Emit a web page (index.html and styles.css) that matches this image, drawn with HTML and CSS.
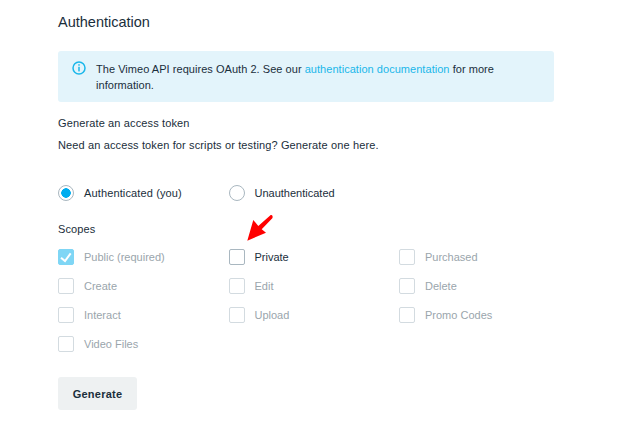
FILE: index.html
```html
<!DOCTYPE html>
<html lang="en">
<head>
  <meta charset="UTF-8">
  <title>Authentication</title>
  <link rel="stylesheet" href="styles.css">
</head>
<body>
  <div class="auth-container">
    <h1 class="auth-title">Authentication</h1>

    <div class="info-box">
      <svg class="info-icon" width="14" height="14" viewBox="0 0 14 14">
        <circle cx="7" cy="7" r="6" fill="none" stroke="#1ab7ea" stroke-width="1.5"/>
        <rect x="6.25" y="3.2" width="1.5" height="1.5" fill="#1ab7ea"/>
        <rect x="6.25" y="5.8" width="1.5" height="4.6" fill="#1ab7ea"/>
      </svg>
      <p>The Vimeo API requires OAuth 2. See our <a href="#">authentication documentation</a> for more information.</p>
    </div>

    <p class="token-title">Generate an access token</p>
    <p class="token-text">Need an access token for scripts or testing? Generate one here.</p>

    <div class="radio-row">
      <label class="radio-item"><span class="radio checked"></span>Authenticated (you)</label>
      <label class="radio-item"><span class="radio"></span>Unauthenticated</label>
    </div>

    <p class="scopes-title">Scopes</p>
    <div class="scopes">
      <label class="scope disabled"><span class="box ticked">
        <svg width="16" height="16" viewBox="0 0 16 16"><path d="M3 8.700L7 12L12.700 4.300" fill="none" stroke="#fff" stroke-width="2"/></svg>
      </span>Public (required)</label>
      <label class="scope active"><span class="box"></span>Private</label>
      <label class="scope disabled"><span class="box"></span>Purchased</label>
      <label class="scope disabled"><span class="box"></span>Create</label>
      <label class="scope disabled"><span class="box"></span>Edit</label>
      <label class="scope disabled"><span class="box"></span>Delete</label>
      <label class="scope disabled"><span class="box"></span>Interact</label>
      <label class="scope disabled"><span class="box"></span>Upload</label>
      <label class="scope disabled"><span class="box"></span>Promo Codes</label>
      <label class="scope disabled"><span class="box"></span>Video Files</label>
    </div>

    <button class="generate-btn" type="button">Generate</button>
  </div>

  <!-- annotation arrow on top of the form -->
  <svg class="arrow" width="29" height="30" viewBox="0 0 29 30">
    <path d="M2.300 27.700L8.300 7L13.300 13L25.700 2Q27 1.500 27.500 3Q27.800 4.300 27.300 5.300L16.700 16.300L21 19.700Z" fill="#f00"/>
  </svg>
</body>
</html>
```

FILE: styles.css
```css
body {
  font-family: "Liberation Sans", Arial, sans-serif;
  font-size: 11px;
  letter-spacing: 0.13px;
  color: #1a2e3b;
  background: white;
  margin: 0;
  padding: 0;
}
p {
  margin: 0;
}
.auth-container {
  width: 496px;
  margin-left: 58px;
}
.auth-title {
  margin: 0;
  padding-top: 14px;
  font-size: 14.5px;
  line-height: 17px;
  font-weight: normal;
  letter-spacing: 0;
}
.info-box {
  display: flex;
  gap: 10px;
  margin-top: 20px;
  padding: 10px 14px 9px 14px;
  height: 51px;
  box-sizing: border-box;
  background: #e3f4fb;
  border-radius: 3px;
}
.info-icon {
  flex-shrink: 0;
}
.info-box p {
  line-height: 16px;
  letter-spacing: 0.04px;
}
.info-box a {
  color: #1ab7ea;
  text-decoration: none;
}
.token-title {
  margin-top: 14px;
  line-height: 14px;
}
.token-text {
  margin-top: 8px;
  line-height: 14px;
}
.radio-row {
  display: flex;
  margin-top: 33px;
}
.radio-item {
  display: flex;
  align-items: center;
  width: 170.500px;
  height: 16px;
}
.radio-item + .radio-item {
  letter-spacing: 0;
}
.radio {
  width: 16px;
  height: 16px;
  box-sizing: border-box;
  border: 1.500px solid #a9b7c0;
  border-radius: 50%;
  margin-right: 10px;
}
.radio.checked {
  background: radial-gradient(circle, #00adef 0, #00adef 4.500px, white 5px);
}
.scopes-title {
  margin-top: 21px;
  line-height: 14px;
}
.scopes {
  display: grid;
  grid-template-columns: repeat(3, 170.500px);
  grid-auto-rows: 29px;
  margin-top: 6px;
  align-items: center;
  letter-spacing: 0;
}
.scope {
  display: flex;
  align-items: center;
}
.box {
  width: 16px;
  height: 16px;
  box-sizing: border-box;
  border: 1px solid #d3dbe0;
  border-radius: 2px;
  margin-right: 10px;
}
.box svg {
  display: block;
  margin: -1px;
}
.box.ticked {
  background: #7fd6f5;
  border-color: #7fd6f5;
}
.scope.disabled {
  color: #9aa5ac;
}
.scope.active .box {
  border: 1.500px solid #a9b7c0;
}
.generate-btn {
  display: block;
  margin-top: 19px;
  width: 79px;
  height: 33px;
  padding: 0;
  background: #eef1f2;
  color: #1a2e3b;
  border: none;
  border-radius: 3px;
  font-family: inherit;
  font-size: 11px;
  font-weight: bold;
  letter-spacing: 0.25px;
}
.arrow {
  position: absolute;
  left: 245px;
  top: 213px;
}
```
